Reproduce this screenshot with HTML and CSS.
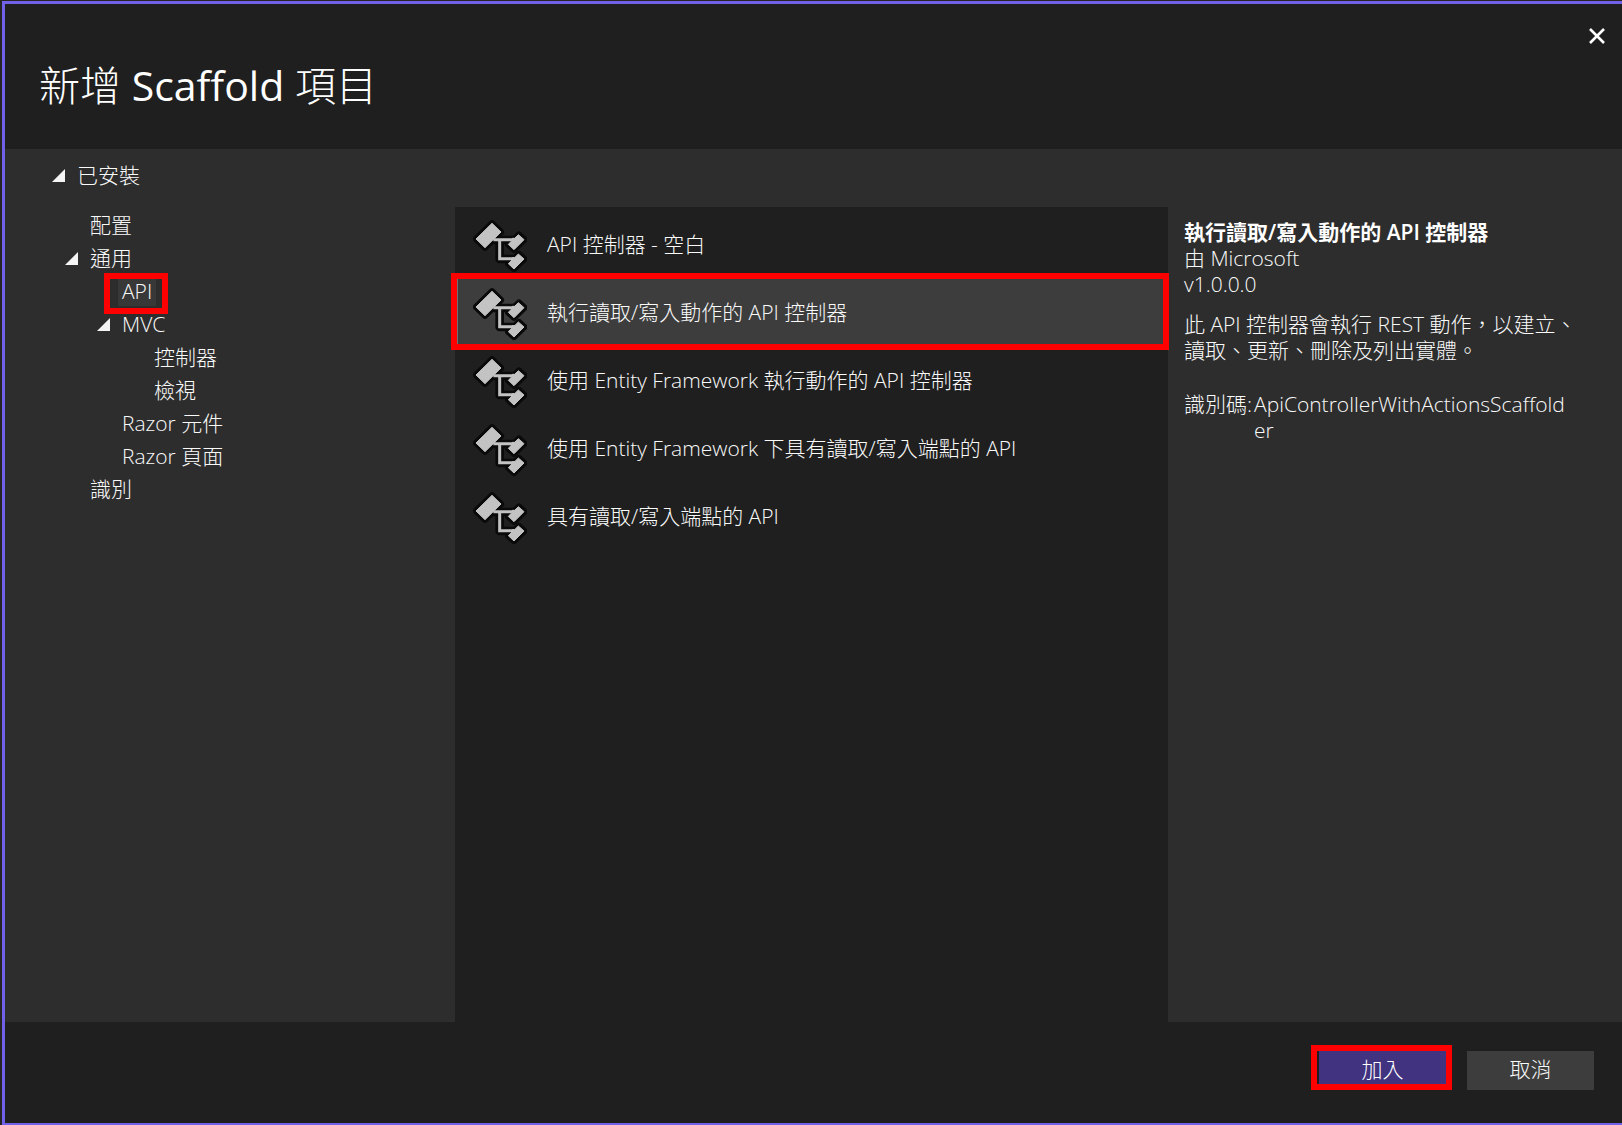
FILE: index.html
```html
<!DOCTYPE html>
<html lang="zh-Hant">
<head>
<meta charset="utf-8">
<title>新增 Scaffold 項目</title>
<link rel="stylesheet" href="styles.css">
</head>
<body>
<svg class="defs" aria-hidden="true">
  <defs>
    <symbol id="scaffold" viewBox="9 12 162 162">
      <g fill="#0a0a0a" stroke="#0a0a0a" stroke-width="19" stroke-linejoin="round">
        <path d="M66 25 93 51 45 98 18 72Z"/>
        <path d="M147 59 163 74 132 104 115 89Z"/>
        <path d="M147 117 163 132 132 162 115 147Z"/>
        <path d="M70 75H135M89 75V132H135" fill="none" stroke-width="26"/>
      </g>
      <g fill="#c3c3c3" stroke="#c3c3c3" stroke-width="3">
        <path d="M66 25 93 51 45 98 18 72Z"/>
        <path d="M145 59 162 74 132 104 115 88 127 76 127 70 134 70Z"/>
        <path d="M145 117 162 132 132 162 115 146 127 134 127 128 134 128Z"/>
        <path d="M70 74H135M89 74V131H135" fill="none" stroke-width="9"/>
      </g>
    </symbol>
    <symbol id="expanded" viewBox="0 0 13 13"><path d="M13 0V13H0Z" fill="#f5f5f5"/></symbol>
  </defs>
</svg>
<main class="dialog">
  <header class="header">
    <h1 class="title">新增 <span class="latin">Scaffold</span> 項目</h1>
    <button class="close" type="button" aria-label="關閉"><svg width="18" height="16" viewBox="0 0 18 16"><path d="M2 1 16 15M16 1 2 15" stroke="#fff" stroke-width="2.6"/></svg></button>
  </header>
  <div class="content">
    <nav class="sidebar">
      <div class="group"><svg class="arrow"><use href="#expanded"/></svg><span>已安裝</span></div>
      <ul class="tree">
        <li class="node">配置</li>
        <li class="node"><svg class="arrow"><use href="#expanded"/></svg>通用</li>
        <li>
          <ul class="branch">
            <li class="node"><span class="current marked">API</span></li>
            <li class="node"><svg class="arrow"><use href="#expanded"/></svg>MVC</li>
            <li>
              <ul class="branch">
                <li class="node">控制器</li>
                <li class="node">檢視</li>
              </ul>
            </li>
            <li class="node">Razor 元件</li>
            <li class="node">Razor 頁面</li>
          </ul>
        </li>
        <li class="node">識別</li>
      </ul>
    </nav>
    <ul class="templates">
      <li class="template"><svg class="icon"><use href="#scaffold"/></svg>API 控制器 - 空白</li>
      <li class="template selected marked"><svg class="icon"><use href="#scaffold"/></svg>執行讀取/寫入動作的 API 控制器</li>
      <li class="template"><svg class="icon"><use href="#scaffold"/></svg>使用 Entity Framework 執行動作的 API 控制器</li>
      <li class="template"><svg class="icon"><use href="#scaffold"/></svg>使用 Entity Framework 下具有讀取/寫入端點的 API</li>
      <li class="template"><svg class="icon"><use href="#scaffold"/></svg>具有讀取/寫入端點的 API</li>
    </ul>
    <aside class="details">
      <h2 class="name">執行讀取/寫入動作的 API 控制器</h2>
      <p>由 Microsoft</p>
      <p>v1.0.0.0</p>
      <p class="description">此 API 控制器會執行 REST 動作，以建立、讀取、更新、刪除及列出實體。</p>
      <dl class="identifier"><dt>識別碼:</dt><dd>ApiControllerWithActionsScaffolder</dd></dl>
    </aside>
  </div>
  <footer class="footer">
    <button class="button primary marked" type="button">加入</button>
    <button class="button" type="button">取消</button>
  </footer>
</main>
</body>
</html>
```
FILE: styles.css
```css
* { box-sizing: border-box; margin: 0; padding: 0; }

body {
  min-height: 100vh;
  display: flex;
  padding: 1px 0 0 2px;
  background: #252526;
  color: #fafafa;
  font: 300 21px/27px "Open Sans", "Noto Sans CJK TC", sans-serif;
}

ul { list-style: none; }

.defs { position: absolute; width: 0; height: 0; }

.dialog {
  flex: 1;
  display: flex;
  flex-direction: column;
  border: 3px solid #7160e8;
  border-width: 3px 0 2px 3px;
  background: #1f1f1f;
}

.header {
  display: flex;
  justify-content: space-between;
  align-items: flex-start;
  height: 145px;
  padding: 24px 16px 0 34px;
}

.title {
  padding-top: 30px;
  font-size: 41px;
  line-height: 54px;
  font-weight: 300;
  color: #fff;
}

.latin { font-weight: 400; }

.close {
  display: flex;
  border: 0;
  background: none;
}

.content {
  flex: 1;
  display: grid;
  grid-template-columns: 450px minmax(0, 713fr) minmax(0, 454fr);
  background: #2d2d2d;
}

.sidebar { padding: 10px 0 0 47px; }

.group {
  display: flex;
  align-items: center;
  gap: 12px;
  height: 33px;
}

.arrow { width: 13px; height: 13px; flex: none; }

.tree { padding: 17px 0 0 38px; }

.branch { padding-left: 32px; }

.node {
  display: flex;
  align-items: center;
  height: 33px;
}

.node .arrow { margin: 0 12px 0 -25px; }

.marked { position: relative; }

.marked::after {
  content: "";
  position: absolute;
  inset: -6px;
  border: 6px solid #f00;
  pointer-events: none;
}

.current {
  margin-left: -4px;
  padding: 0 4px;
  line-height: 29px;
  background: #383838;
}

.current::after { inset: -4px -12px -8px -14px; }

.templates {
  margin-top: 58px;
  padding: 3px 5px 0 2px;
  background: #1f1f1f;
}

.template {
  display: flex;
  align-items: center;
  gap: 20px;
  height: 68px;
  padding-left: 16px;
}

.icon { width: 54px; height: 54px; flex: none; margin-top: 4px; }

.selected {
  border: 1px solid #707070;
  border-width: 1px 0 1px 1px;
  padding-left: 15px;
  background: #3d3d3d;
}

.selected::after { inset: -6px -6px -5px -7px; }

.details {
  padding: 70px 42px 0 16px;
  line-height: 26px;
}

.name { font-size: 21px; font-weight: 600; color: #fff; }

.description { padding-top: 14px; }

.identifier {
  display: flex;
  gap: 2px;
  padding: 28px 8px 0 0;
}

.identifier dt { flex: none; }

.identifier dd { word-break: break-all; }

.footer {
  display: flex;
  justify-content: flex-end;
  gap: 21px;
  height: 101px;
  padding: 29px 28px 0 0;
}

.button {
  width: 127px;
  height: 39px;
  padding-bottom: 3px;
  border: 0;
  background: #3d3d3d;
  color: inherit;
  font: inherit;
}

.primary { background: #413380; color: #fff; }

.primary::after { inset: -6px -6px 0 -8px; }
```
